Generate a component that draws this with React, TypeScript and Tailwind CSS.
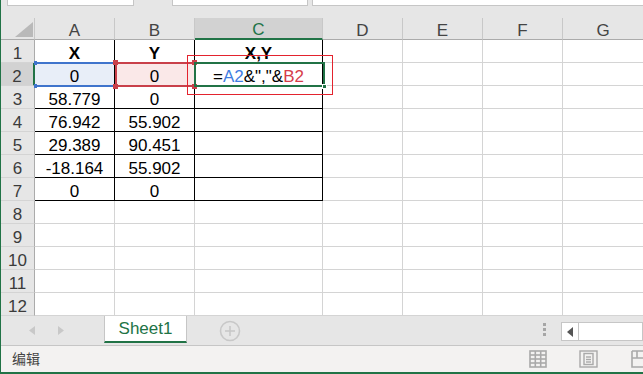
const cols = [
  { id: "A", w: "w-[80px]" },
  { id: "B", w: "w-[80px]" },
  { id: "C", w: "w-[128px]" },
  { id: "D", w: "w-[80px]" },
  { id: "E", w: "w-[80px]" },
  { id: "F", w: "w-[80px]" },
  { id: "G", w: "w-[81px]" },
];

const data: (string | null)[][] = [
  ["X", "Y", "X,Y"],
  ["0", "0", null],
  ["58.779", "0", ""],
  ["76.942", "55.902", ""],
  ["29.389", "90.451", ""],
  ["-18.164", "55.902", ""],
  ["0", "0", ""],
];

const Formula = () => (
  <span>
    =<span className="text-[#3f7de2]">A2</span>&amp;&quot;,&quot;&amp;
    <span className="text-[#d63c4a]">B2</span>
  </span>
);

const CornerIcon = () => (
  <svg width="34" height="21" viewBox="0 0 34 21">
    <polygon points="14,19 32,19 32,4" fill="#b9b9b9" />
  </svg>
);

const GridIcon = () => (
  <svg width="18" height="18" viewBox="0 0 18 18" fill="none" stroke="#a9a9a9" strokeWidth="1.6">
    <rect x="1" y="1" width="16" height="16" />
    <line x1="6.3" y1="1" x2="6.3" y2="17" />
    <line x1="11.7" y1="1" x2="11.7" y2="17" />
    <line x1="1" y1="5" x2="17" y2="5" />
    <line x1="1" y1="9" x2="17" y2="9" />
    <line x1="1" y1="13" x2="17" y2="13" />
  </svg>
);

const PageIcon = () => (
  <svg width="19" height="18" viewBox="0 0 19 18" fill="none" stroke="#a9a9a9" strokeWidth="1.4">
    <rect x="1" y="1" width="17" height="16" />
    <rect x="5" y="3.5" width="9" height="11" />
    <line x1="7" y1="7" x2="12" y2="7" />
    <line x1="7" y1="9.5" x2="12" y2="9.5" />
    <line x1="7" y1="12" x2="12" y2="12" />
  </svg>
);

const BreakIcon = () => (
  <svg width="12" height="18" viewBox="0 0 12 18" fill="none" stroke="#a9a9a9" strokeWidth="1.6">
    <path d="M1 1h12M1 1v16h12M6 1v7M1 8h12" />
  </svg>
);

function Selection() {
  return (
    <>
      {/* A2 reference (blue) */}
      <div className="absolute left-[35px] top-[62px] w-[80px] h-[2px] bg-[#3f74cc]" />
      <div className="absolute left-[35px] top-[85px] w-[80px] h-[2px] bg-[#3f74cc]" />
      <div className="absolute left-[33px] top-[61px] w-[3px] h-[4px] bg-[#3f74cc]" />
      <div className="absolute left-[33px] top-[84px] w-[3px] h-[4px] bg-[#3f74cc]" />
      {/* B2 reference (red) */}
      <div className="absolute left-[114px] top-[62px] w-[80px] h-[2px] bg-[#c9404a]" />
      <div className="absolute left-[114px] top-[85px] w-[80px] h-[2px] bg-[#c9404a]" />
      <div className="absolute left-[114px] top-[62px] w-[2px] h-[25px] bg-[#c9404a]" />
      <div className="absolute left-[112px] top-[60px] w-[5px] h-[5px] bg-[#c9404a]" />
      <div className="absolute left-[112px] top-[84px] w-[5px] h-[5px] bg-[#c9404a]" />
      <div className="absolute left-[191px] top-[60px] w-[5px] h-[5px] bg-[#c9404a]" />
      <div className="absolute left-[191px] top-[84px] w-[5px] h-[5px] bg-[#c9404a]" />
      {/* active cell C2 */}
      <div className="absolute left-[193px] top-[62px] w-[131px] h-[25px] border-2 border-[#217346]" />
      <div className="absolute left-[321px] top-[84px] w-[5px] h-[5px] bg-[#217346] border border-white" />
      {/* annotation box */}
      <div className="absolute left-[186px] top-[55px] w-[146px] h-[40px] border border-[#e3232e]" />
    </>
  );
}

export default function App() {
  return (
    <div className="relative w-[643px] h-[374px] overflow-hidden bg-[#e6e6e6] border-l border-[#217346] font-['Liberation_Sans','Noto_Sans_CJK_SC',sans-serif] text-[17px] text-black">
      {/* formula bar remnants */}
      <div className="flex h-[18px] items-start">
        <div className="ml-[6px] w-[127px] h-[6px] shrink-0 bg-white border-x border-b border-[#c6c6c6]" />
        <div className="ml-[38px] w-[136px] h-[6px] shrink-0 bg-white border-x border-b border-[#c6c6c6]" />
        <div className="ml-[4px] flex-1 h-[6px] bg-white border-l border-b border-[#c6c6c6]" />
      </div>

      {/* column headers */}
      <div className="flex h-[22px]">
        <div className="w-[34px] shrink-0 border-r border-b border-r-[#c8c8c8] border-b-[#ababab]">
          <CornerIcon />
        </div>
        {cols.map((c) => (
          <div
            key={c.id}
            className={`${c.w} shrink-0 flex items-end justify-center leading-[17px] border-r border-r-[#c8c8c8] ${
              c.id === "C"
                ? "bg-[#d2d2d2] border-b-2 border-b-[#217346] text-[#217346]"
                : "border-b border-b-[#ababab] text-[#444]"
            }`}
          >
            {c.id}
          </div>
        ))}
      </div>

      {/* grid */}
      {Array.from({ length: 12 }, (_, r) => (
        <div key={r} className="flex h-[23px] bg-white">
          <div
            className={`w-[34px] shrink-0 flex items-end justify-center leading-[17px] border-b border-b-[#d4d4d4] text-[#3b3b3b] ${
              r === 1
                ? "bg-[#d2d2d2] border-r-2 border-r-[#217346]"
                : "bg-[#e6e6e6] border-r border-r-[#ababab]"
            }`}
          >
            {r + 1}
          </div>
          {cols.map((c, ci) => {
            const inTable = r < 7 && ci < 3;
            const val = inTable ? data[r][ci] : "";
            const fill =
              r === 1 && ci === 0 ? "bg-[#e8eef8]" : r === 1 && ci === 1 ? "bg-[#fae8e8]" : "";
            return (
              <div
                key={c.id}
                className={`${c.w} shrink-0 flex items-end justify-center leading-[17px] border-r border-b whitespace-nowrap ${
                  inTable ? "border-black" : "border-[#d4d4d4]"
                } ${r === 0 ? "font-bold" : ""} ${fill}`}
              >
                {r === 1 && ci === 2 ? <Formula /> : val}
              </div>
            );
          })}
        </div>
      ))}

      {/* sheet tabs */}
      <div className="flex h-[30px] border-b border-[#c6c6c6]">
        <div className="w-[103px] shrink-0 flex items-center pl-[27px] gap-[21px] text-[#c8c8c8]">
          <svg width="8" height="9" viewBox="0 0 8 9">
            <polygon points="7,0 7,9 1,4.5" fill="#c8c8c8" />
          </svg>
          <svg width="8" height="9" viewBox="0 0 8 9">
            <polygon points="1,0 1,9 7,4.5" fill="#c8c8c8" />
          </svg>
        </div>
        <div className="w-[83px] h-[27px] shrink-0 flex items-center justify-center leading-[17px] bg-white border-x border-[#c6c6c6] border-b-2 border-b-[#217346] text-[#217346]">
          Sheet1
        </div>
        <div className="ml-[32px] flex items-center">
          <svg width="22" height="22" viewBox="0 0 22 22" fill="none" stroke="#c8c8c8" strokeWidth="1.6">
            <circle cx="11" cy="11" r="9.5" />
            <line x1="11" y1="6" x2="11" y2="16" />
            <line x1="6" y1="11" x2="16" y2="11" />
          </svg>
        </div>
        <div className="flex-1" />
        <div className="flex flex-col justify-center gap-[2px] pb-[2px]">
          <div className="w-[3px] h-[3px] bg-[#a6a6a6]" />
          <div className="w-[3px] h-[3px] bg-[#a6a6a6]" />
          <div className="w-[3px] h-[3px] bg-[#a6a6a6]" />
        </div>
        <div className="ml-[15px] w-[82px] h-[19px] mt-[6px] flex bg-white border border-[#c6c6c6]">
          <div className="w-[17px] flex items-center justify-center border-r border-[#c6c6c6]">
            <svg width="6" height="10" viewBox="0 0 6 10">
              <polygon points="6,0 6,10 0,5" fill="#555" />
            </svg>
          </div>
        </div>
      </div>

      {/* status bar */}
      <div className="flex items-center h-[28px] bg-[#f3f2f1] border-b-2 border-[#217346] text-[14px] text-[#444]">
        <span className="pl-[11px] leading-[14px]">编辑</span>
        <div className="flex-1" />
        <GridIcon />
        <div className="ml-[32px]">
          <PageIcon />
        </div>
        <div className="ml-[33px]">
          <BreakIcon />
        </div>
      </div>

      <Selection />
    </div>
  );
}
